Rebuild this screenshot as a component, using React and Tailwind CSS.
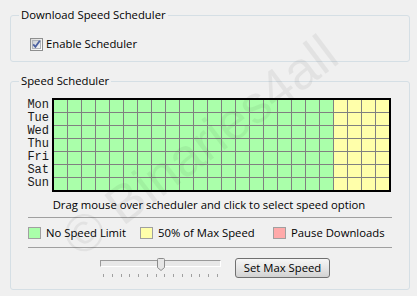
import React from "react";

const days = ["Mon", "Tue", "Wed", "Thu", "Fri", "Sat", "Sun"];
const font = { fontFamily: '"Open Sans", "Noto Sans", sans-serif' };

function Checkbox() {
  return (
    <div className="w-[13px] h-[13px] border border-[#8e8f8f] bg-gradient-to-br from-[#dcdcdc] to-[#ffffff] flex items-center justify-center">
      <div className="w-[9px] h-[9px] bg-gradient-to-br from-[#cbcfd5] to-[#f6f6f6] flex items-center justify-center border border-[#b0b4ba]">
        <svg width="9" height="9" viewBox="0 0 9 9" className="overflow-visible">
          <path d="M1.2 4.4 L3.4 6.8 L7.8 0.8" fill="none" stroke="#4c61a1" strokeWidth="1.8" />
        </svg>
      </div>
    </div>
  );
}

export default function App() {
  const ticks = Array.from({ length: 14 });
  return (
    <div
      className="relative w-[417px] h-[296px] bg-[#f0f0f0] overflow-hidden text-[11.3px] text-black"
      style={font}
    >
      <fieldset className="mt-[7px] ml-[10px] w-[400px] h-[55px] border border-[#d5dfe5] rounded-[3px]">
        <legend className="ml-[8px] px-[2px] leading-[16px]">Download Speed Scheduler</legend>
        <div className="flex items-center gap-[3px] pl-[19px] pt-[13px]">
          <Checkbox />
          <span className="leading-[16px]">Enable Scheduler</span>
        </div>
      </fieldset>

      <fieldset className="mt-[11px] ml-[10px] w-[400px] h-[217px] border border-[#d5dfe5] rounded-[3px]">
        <legend className="ml-[8px] px-[2px] leading-[16px]">Speed Scheduler</legend>

        <div className="flex gap-[3px] mt-[9px]">
          <div
            className="w-[38px] pt-[1px] text-right text-[12px] leading-[13px] text-[#1a1a1a]"
            style={{ fontFamily: '"Liberation Mono", monospace' }}
          >
            {days.map((d) => (
              <div key={d} className="h-[13px]">{d}</div>
            ))}
          </div>
          <div className="grid grid-cols-[repeat(24,13px)] grid-rows-[repeat(7,12px)] gap-px bg-[#808080] border-2 border-black">
            {days.map((d) =>
              Array.from({ length: 24 }).map((_, i) => (
                <div key={d + i} className={i < 20 ? "bg-[#aaffaa]" : "bg-[#ffffaa]"} />
              ))
            )}
          </div>
        </div>

        <div className="mt-[5px] leading-[16px] text-center pr-[2px]">
          Drag mouse over scheduler and click to select speed option
        </div>

        <div className="mt-[4px] ml-[17px] w-[364px] border-t border-[#a0a0a0]" />

        <div className="mt-[7px] ml-[17px] flex items-center h-[16px] leading-[16px]">
          <div className="w-[112px] flex items-center gap-[5px]">
            <div className="w-[13px] h-[12px] border border-[#a0a0a0] bg-[#aaffaa]" />
            <span>No Speed Limit</span>
          </div>
          <div className="w-[133px] flex items-center gap-[5px]">
            <div className="w-[13px] h-[12px] border border-[#a0a0a0] bg-[#ffffaa]" />
            <span>50% of Max Speed</span>
          </div>
          <div className="flex items-center gap-[5px]">
            <div className="w-[13px] h-[12px] border border-[#a0a0a0] bg-[#ffaaaa]" />
            <span>Pause Downloads</span>
          </div>
        </div>

        <div className="mt-[6px] ml-[17px] w-[364px] border-t border-[#a0a0a0]" />

        <div className="mt-[10px] flex items-start">
          <div className="ml-[89px] w-[121px] relative">
            <div className="h-[7px] mt-[2px] border border-t-[#9a9a9a] border-l-[#9a9a9a] border-r-[#ffffff] border-b-[#ffffff] bg-[#e8e8e8]" />
            <div className="flex justify-between px-[3px] mt-[7px]">
              {ticks.map((_, i) => (
                <div key={i} className="w-px h-[3px] bg-[#a0a0a0]" />
              ))}
            </div>
            <svg className="absolute left-[57px] top-[0px]" width="8" height="13" viewBox="0 0 8 13">
              <path d="M0.5 1.5 Q0.5 0.5 1.5 0.5 L6.5 0.5 Q7.5 0.5 7.5 1.5 L7.5 9.5 L4 12.5 L0.5 9.5 Z" fill="#e6e6e6" stroke="#8c8c8c" />
            </svg>
          </div>
          <button
            className="ml-[14px] w-[95px] h-[20px] border border-[#707070] rounded-[3px] bg-gradient-to-b from-[#f6f6f6] via-[#e6e6e6] to-[#d2d2d2] leading-[16px] text-black"
            style={font}
          >
            Set Max Speed
          </button>
        </div>
      </fieldset>

      <div
        className="absolute left-[36px] top-[116px] text-[53px] leading-[60px] text-black/[0.055] pointer-events-none whitespace-nowrap origin-center -rotate-[37deg]"
        style={{ fontFamily: '"Liberation Sans", sans-serif' }}
      >
        © Binaries4all
      </div>
    </div>
  );
}
